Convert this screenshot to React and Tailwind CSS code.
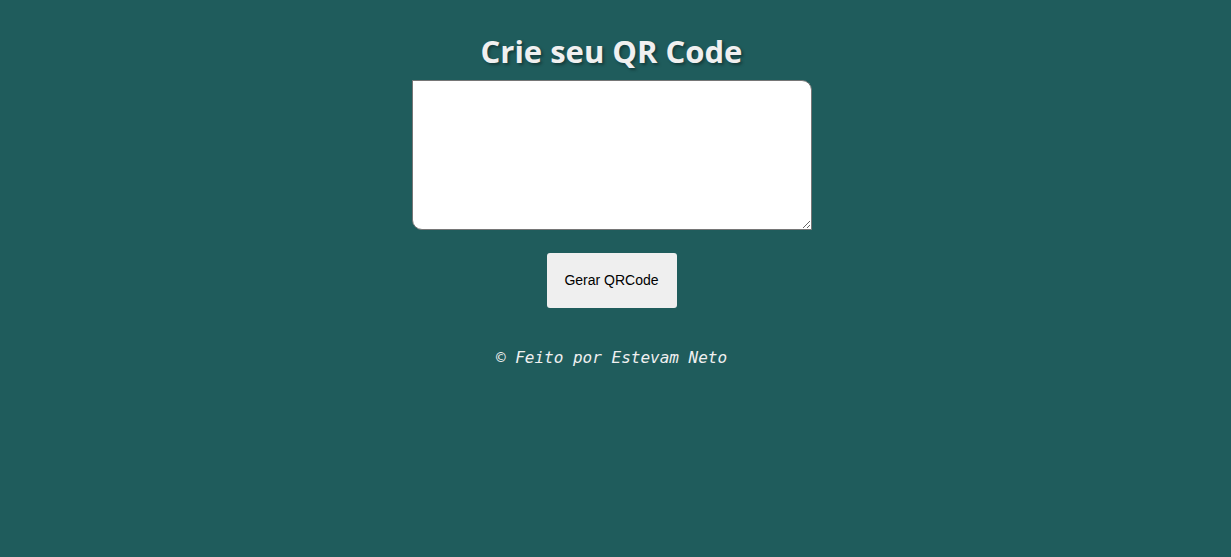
export default function App() {
  return (
    <div className="min-h-[557px] bg-[#1f5c5c] flex flex-col items-center pt-[31px] pr-[8px]">
      <h1 className="text-[31px] leading-[40px] font-bold text-[#f0f0f0] font-['Open_Sans','Noto_Sans',sans-serif] [text-shadow:2px_2px_3px_rgba(0,0,0,0.35)]">
        Crie seu QR Code
      </h1>
      <textarea className="mt-[9px] w-[400px] h-[150px] bg-white border border-[#767676] rounded-[0_10px_0_10px] resize-y p-1 text-sm" />
      <button className="mt-[23px] w-[130px] h-[55px] bg-[#efefef] rounded-[3px] text-[14px] text-black font-['Liberation_Sans',Arial,sans-serif]">
        Gerar QRCode
      </button>
      <p className="mt-[38px] text-[16px] italic text-[#f0f0f0] font-['DejaVu_Sans_Mono','Liberation_Mono',monospace]">
        © Feito por Estevam Neto
      </p>
    </div>
  )
}
